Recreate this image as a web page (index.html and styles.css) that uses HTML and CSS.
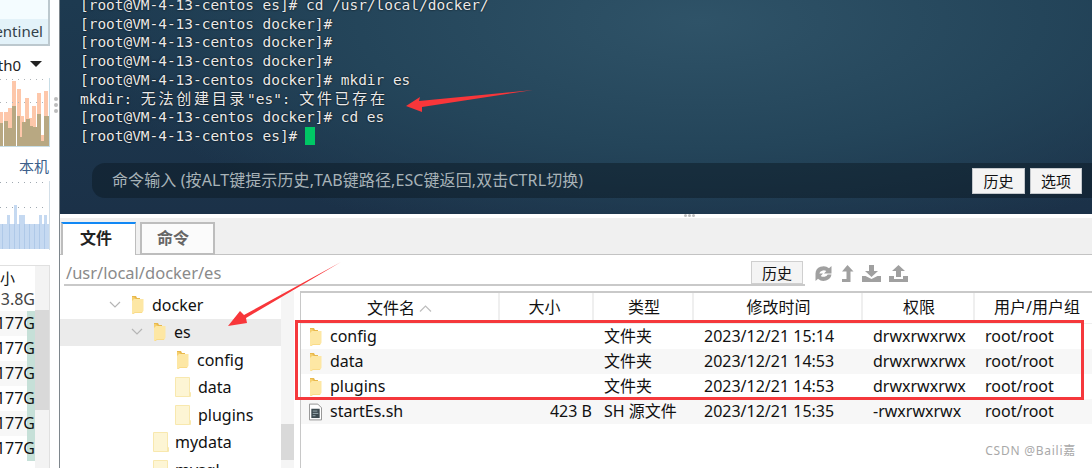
FILE: index.html
```html
<!DOCTYPE html>
<html lang="zh">
<head>
<meta charset="utf-8">
<title>FinalShell</title>
<link rel="stylesheet" href="styles.css">
</head>
<body>
<svg class="defs" width="0" height="0" aria-hidden="true">
  <symbol id="folder" viewBox="0 0 13 18">
    <path d="M1 0h4l1 2h3v14H1z" fill="#e8b84c"/>
    <path d="M0 1h1v17h1l2-1h7l1-14H5L3 1z" fill="#f6cf6d"/>
    <path d="M3 3h9.500v11.500l-1 2H3.500L1.500 18H1V5z" fill="#fde7a4"/>
  </symbol>
  <symbol id="pale" viewBox="0 0 16 20">
    <path d="M.5.500h14v15h1v4H.5z" fill="#fdf5d4" stroke="#f8e8ae"/>
    <path d="M14.500 14v5" stroke="#f8e8ae" fill="none"/>
  </symbol>
  <symbol id="chev" viewBox="0 0 12 8">
    <path d="M1 1l5 5 5-5" fill="none" stroke="#b5b5b5" stroke-width="1.200"/>
  </symbol>
</svg>
<div class="app">
  <aside class="side">
    <div class="tabhead"><span class="tabname">Sentinel</span></div>
    <div class="netsel"><span class="netname">eth0</span><span class="tri"></span></div>
    <svg class="chart" width="50" height="69" viewBox="0 78 50 69">
      <g class="orange">
        <rect x="0" y="112" width="3" height="34"/><rect x="4" y="112" width="4" height="34"/><rect x="8" y="108" width="4" height="38"/><rect x="12" y="81" width="4" height="65"/><rect x="17" y="89" width="4" height="57"/><rect x="21" y="116" width="3" height="30"/><rect x="25" y="98" width="4" height="48"/><rect x="29" y="118" width="3" height="28"/><rect x="32" y="106" width="4" height="40"/><rect x="37" y="93" width="4" height="53"/><rect x="41" y="135" width="3" height="11"/><rect x="44" y="91" width="4" height="55"/>
      </g>
      <g class="tan">
        <rect x="0" y="123" width="3" height="23"/><rect x="4" y="121" width="4" height="25"/><rect x="8" y="128" width="4" height="18"/><rect x="12" y="106" width="4" height="40"/><rect x="17" y="116" width="3" height="30"/><rect x="19" y="137" width="3" height="9"/><rect x="22" y="122" width="4" height="24"/><rect x="26" y="119" width="4" height="27"/><rect x="29" y="126" width="4" height="20"/><rect x="33" y="127" width="4" height="19"/><rect x="37" y="114" width="4" height="32"/><rect x="41" y="141" width="3" height="5"/><rect x="44" y="116" width="5" height="30"/>
      </g>
      <path class="dots" d="M0 79.500h48M0 102.500h48"/>
      <path class="baseline" d="M0 146.500h49M49.500 78v69"/>
    </svg>
    <div class="hostlabel">本机</div>
    <svg class="chart chart-blue" width="50" height="69" viewBox="0 180 50 69">
      <g class="blue">
        <rect x="0" y="223" width="49" height="25"/><rect x="7" y="214" width="3" height="9"/><rect x="14" y="204" width="3" height="19"/><rect x="19" y="214" width="6" height="9"/><rect x="39" y="214" width="3" height="9"/><rect x="44" y="214" width="3" height="9"/>
      </g>
      <path class="stripes" d="M2.500 223v25M9.500 223v25M14.500 223v25M19.500 223v25M24.500 223v25M29.500 223v25M34.500 223v25M39.500 223v25M44.500 223v25"/>
      <path class="dots dots-blue" d="M0 181.500h48M0 206.500h48"/>
      <path class="baseline-blue" d="M49.500 180v69"/>
    </svg>
    <div class="disks">
      <div class="disklist">
        <div class="diskhead">小</div>
        <div class="disk"><span class="disksize">3.8G</span></div>
        <div class="disk alt"><span class="disksize used">177G</span></div>
        <div class="disk"><span class="disksize used">177G</span></div>
        <div class="disk alt"><span class="disksize used">177G</span></div>
        <div class="disk"><span class="disksize used">177G</span></div>
        <div class="disk alt"><span class="disksize used">177G</span></div>
        <div class="disk"><span class="disksize used">177G</span></div>
      </div>
      <div class="diskscroll"><div class="diskthumb"></div></div>
    </div>
    <div class="grip grip-side"><i></i><i></i><i></i></div>
  </aside>

  <main class="main">
    <section class="term">
      <div class="log">
        <div>[root@VM-4-13-centos es]# cd /usr/local/docker/</div>
        <div>[root@VM-4-13-centos docker]#</div>
        <div>[root@VM-4-13-centos docker]#</div>
        <div>[root@VM-4-13-centos docker]#</div>
        <div>[root@VM-4-13-centos docker]# mkdir es</div>
        <div>mkdir: <span class="wide">无法创建目录</span>"es": <span class="wide">文件已存在</span></div>
        <div>[root@VM-4-13-centos docker]# cd es</div>
        <div>[root@VM-4-13-centos es]# <span class="cursor"></span></div>
      </div>
      <div class="cmdbar">
        <span class="cmdhint">命令输入 (按ALT键提示历史,TAB键路径,ESC键返回,双击CTRL切换)</span>
        <button class="cmdbtn">历史</button>
        <button class="cmdbtn">选项</button>
      </div>
    </section>

    <section class="lower">
      <div class="grip grip-h"><i></i><i></i><i></i></div>
      <div class="tabs">
        <div class="tab active">文件</div>
        <div class="tab">命令</div>
      </div>
      <div class="pathbar">
        <div class="pathbox">
          <span class="pathtext">/usr/local/docker/es</span>
          <button class="histbtn">历史</button>
        </div>
        <div class="tools">
          <svg width="19" height="17" viewBox="0 0 19 17"><path d="M1.500 8.500a8 7.500 0 0 1 13.500-5.200L17.500 1v7.500H10l2.300-2.400a4.500 4 0 0 0-7 2.400z M17.500 9.500a8 7.500 0 0 1-13.500 4.200L1.500 16V8.500H9l-2.300 2.400a4.500 4 0 0 0 7-1.400z" fill="#a0a0a0"/></svg>
          <svg width="13" height="17" viewBox="0 0 13 17"><path d="M6.500 0L12.500 6.500H9.500V17H1v-3h4.500V6.500H1z" fill="#a0a0a0"/></svg>
          <svg width="19" height="17" viewBox="0 0 19 17"><path d="M7 0h5v6h4l-6.500 6L3 6h4z" fill="#a0a0a0"/><path d="M0 11h3.500l6 3 6-3H19v6H0z" fill="#a0a0a0"/></svg>
          <svg width="19" height="17" viewBox="0 0 19 17"><path d="M9.500 0L16 6h-4v6H7V6H3z" fill="#a0a0a0"/><path d="M0 11h5v3h9v-3h5v6H0z" fill="#a0a0a0"/></svg>
        </div>
      </div>
      <div class="browser">
        <div class="tree">
          <div class="node d1"><svg class="chev"><use href="#chev"/></svg><svg class="fold"><use href="#folder"/></svg><span>docker</span></div>
          <div class="node d2 selected"><svg class="chev"><use href="#chev"/></svg><svg class="fold"><use href="#folder"/></svg><span>es</span></div>
          <div class="node d3"><svg class="fold gap"><use href="#folder"/></svg><span>config</span></div>
          <div class="node d3"><svg class="fold palef"><use href="#pale"/></svg><span>data</span></div>
          <div class="node d3"><svg class="fold palef"><use href="#pale"/></svg><span>plugins</span></div>
          <div class="node d2n"><svg class="fold palef"><use href="#pale"/></svg><span>mydata</span></div>
          <div class="node d2n"><svg class="fold palef"><use href="#pale"/></svg><span>mysql</span></div>
        </div>
        <div class="treescroll"><div class="treethumb"></div></div>
        <div class="grip grip-v"><i></i><i></i><i></i></div>
        <div class="files">
          <div class="row head">
            <div class="c name">文件名<svg class="sort" width="13" height="7" viewBox="0 0 13 7"><path d="M1 6.500l5.500-5.500 5.500 5.500" fill="none" stroke="#bdbdbd" stroke-width="1.200"/></svg></div>
            <div class="c">大小</div><div class="c">类型</div><div class="c">修改时间</div><div class="c">权限</div><div class="c">用户/用户组</div>
          </div>
          <div class="row">
            <div class="c name"><svg class="ficon"><use href="#folder"/></svg>config</div><div class="c size"></div><div class="c">文件夹</div><div class="c">2023/12/21 15:14</div><div class="c">drwxrwxrwx</div><div class="c">root/root</div>
          </div>
          <div class="row alt">
            <div class="c name"><svg class="ficon"><use href="#folder"/></svg>data</div><div class="c size"></div><div class="c">文件夹</div><div class="c">2023/12/21 14:53</div><div class="c">drwxrwxrwx</div><div class="c">root/root</div>
          </div>
          <div class="row">
            <div class="c name"><svg class="ficon"><use href="#folder"/></svg>plugins</div><div class="c size"></div><div class="c">文件夹</div><div class="c">2023/12/21 14:53</div><div class="c">drwxrwxrwx</div><div class="c">root/root</div>
          </div>
          <div class="row alt">
            <div class="c name"><svg class="ficon" viewBox="0 0 14 18"><path d="M.5.500h9l4 4v13H.5z" fill="#fff" stroke="#8c8c8c"/><rect x="2.500" y="5.500" width="9" height="10" fill="#3d4a50"/><path d="M4 8h5M4 10.500h6M4 13h3" stroke="#9fb0b6"/></svg>startEs.sh</div><div class="c size">423 B</div><div class="c">SH 源文件</div><div class="c">2023/12/21 15:35</div><div class="c">-rwxrwxrwx</div><div class="c">root/root</div>
          </div>
        </div>
      </div>
    </section>
  </main>
</div>

<div class="redbox"></div>
<svg class="arrows" width="1092" height="468" viewBox="0 0 1092 468">
  <path d="M406 106L420 97 419 101 533 90 422 107 422 112z" fill="#f8363a"/>
  <path d="M228 326L240 311 244 315 341 262 246 318 247 323z" fill="#f8363a"/>
</svg>
<div class="mark">CSDN @Baili嘉</div>
</body>
</html>
```
FILE: styles.css
```css
* { box-sizing: border-box; }
html, body { margin: 0; height: 468px; overflow: hidden; background: #fff; }
body { font-family: "Noto Sans", "Noto Sans CJK SC", sans-serif; font-size: 16px; color: #111; position: relative; }
.defs { position: absolute; }
.app { display: grid; grid-template-columns: 60px 1fr; height: 468px; }

/* sidebar */
.side { position: relative; height: 468px; overflow: hidden; border-right: 1px solid #7e868c; background: #fff; }
.tabhead { width: 50px; height: 46px; background: linear-gradient(#f4fcff 0, #f4fcff 19px, #e3f2f9 19px); border-right: 2px solid #bcc8ce; border-bottom: 2px solid #bcc8ce; display: flex; justify-content: flex-end; align-items: flex-end; overflow: hidden; padding: 0 5px 2px 0; }
.tabname { font-size: 15px; line-height: 22px; color: #33414a; white-space: nowrap; }
.netsel { width: 50px; height: 32px; display: flex; justify-content: flex-end; align-items: center; overflow: hidden; padding: 6px 8px 0 0; }
.netname { font-size: 15px; white-space: nowrap; margin-right: 9px; color: #222; line-height: 20px; }
.tri { flex: none; width: 0; height: 0; border-left: 6px solid transparent; border-right: 6px solid transparent; border-top: 6px solid #222; margin-top: -3px; }
.chart { display: block; }
.orange rect { fill: #fdc7aa; }
.tan rect { fill: #b8a882; }
.dots { stroke: #aeb4b8; fill: none; stroke-dasharray: 1 5; }
.dots-blue { stroke: #9fa8b0; }
.baseline { stroke: #c7dde6; fill: none; }
.baseline-blue { stroke: #d3dfe8; fill: none; }
.blue rect { fill: #c5d9f1; }
.stripes { stroke: #afc9e8; fill: none; }
.hostlabel { width: 50px; height: 34px; text-align: right; padding-right: 1px; font-size: 15px; line-height: 38px; color: #3d5f8b; }
.disks { width: 50px; margin-top: 15px; height: 220px; display: flex; border: 1px solid #e0e0e0; border-width: 1px 1px 0 0; }
.disklist { flex: none; width: 35px; overflow: hidden; }
.diskhead { height: 22px; line-height: 24px; font-size: 15px; white-space: nowrap; }
.disk { height: 25px; display: flex; justify-content: flex-end; font-size: 16px; line-height: 25px; white-space: nowrap; overflow: hidden; }
.disk:nth-child(2) { height: 23px; line-height: 22px; color: #444; }
.disk.alt { background: #f7f7f7; }
.disksize { flex: none; display: block; }
.used { background: linear-gradient(270deg, #c6e0d8 0, #c6e0d8 8px, transparent 8px); }
.diskscroll { flex: 1; background: #f3f3f3; }
.diskthumb { height: 100px; margin-top: 44px; background: #d9d9d9; }

.grip { position: absolute; display: flex; gap: 3px; }
.grip i { display: block; width: 3px; height: 3px; border-radius: 50%; background: #bcbcbc; }
.grip-side { left: 54px; top: 97px; flex-direction: column; gap: 2px; }
.grip-side i { width: 4px; height: 4px; }
.grip-h { left: 624px; top: 0; gap: 1px; }
.grip-v { left: -4px; top: 114px; flex-direction: column; gap: 2px; }

/* terminal */
.main { display: flex; flex-direction: column; min-width: 0; }
.term { height: 214px; flex: none; position: relative; overflow: hidden; background: radial-gradient(ellipse 620px 230px at 62% 10%, #2f5368 0, #24455a 55%, rgba(31,56,78,0) 100%), linear-gradient(#1d3a50, #1b3148); }
.log { padding-top: 1px; margin: -5px 0 0 20px; font-family: "DejaVu Sans Mono", monospace; font-size: 14.45px; line-height: 18.72px; color: #eaeaea; text-shadow: 0 0 2px #000; }
.log div { white-space: pre; height: 18.72px; }
.wide { font-family: "Noto Sans CJK SC", sans-serif; font-size: 15px; letter-spacing: 2.7px; line-height: 1; }
.cursor { display: inline-block; width: 10px; height: 18px; background: #00c765; vertical-align: -4px; margin-left: -1px; }
.cmdbar { position: absolute; left: 32px; right: 0; top: 163px; height: 35px; border-radius: 13px 0 0 13px; background: rgba(12, 26, 36, .5); display: flex; align-items: center; padding: 0 10px 0 20px; gap: 5px; }
.cmdhint { flex: 1; font-size: 16px; letter-spacing: .1px; color: #a8b3b8; white-space: nowrap; line-height: 37px; }
.cmdbtn { width: 53px; height: 26px; padding: 0; border: 1px solid #c4c8cc; background: #f4f4f4; font: 15px "Noto Sans CJK SC", sans-serif; color: #111; }
.cmdbtn:last-child { width: 52px; }

/* lower */
.lower { flex: 1; position: relative; min-height: 0; padding-top: 4px; display: flex; flex-direction: column; }
.tabs { height: 37px; flex: none; display: flex; gap: 4px; background: #f0f0f0; border-bottom: 1px solid #c3c3c3; padding: 4px 0 0 1px; }
.tab { width: 75px; height: 33px; border: 2px solid #bdbdbd; background: #fbfbfb; color: #666; font-weight: 700; text-align: center; font-size: 16px; line-height: 29px; padding-right: 9px; }
.tab.active { width: 75px; height: 33px; background: #fff; color: #222; border-top-color: #1188f5; border-bottom: 0; position: relative; z-index: 1; border-right-width: 1px; padding-right: 6px; }
.pathbar { height: 36px; flex: none; display: flex; align-items: flex-start; padding-left: 4px; background: #fff; }
.pathbox { width: 741px; height: 31px; border-bottom: 2px solid #c9c9c9; display: flex; align-items: flex-end; justify-content: space-between; padding: 0 2px 0 2px; }
.pathtext { font-size: 16.500px; color: #8a8a8a; line-height: 22px; }
.histbtn { width: 52px; height: 23px; padding: 0; border: 1px solid #cfcfcf; background: #f4f4f4; font: 15px "Noto Sans CJK SC", sans-serif; color: #111; }
.tools { display: flex; gap: 8px; padding: 10px 0 0 9px; }
.tools svg { display: block; flex: none; }
.browser { flex: 1; display: flex; min-height: 0; position: relative; overflow: hidden; }
.tree { width: 221px; flex: none; overflow: hidden; }
.treescroll { width: 13px; flex: none; background: #f5f5f5; padding-top: 133px; }
.treethumb { height: 36px; background: #d9d9d9; }
.node { height: 27.5px; display: flex; align-items: center; font-size: 16px; white-space: nowrap; }
.node.selected { background: #ebebeb; }
.chev { width: 12px; height: 8px; flex: none; margin-right: 10px; }
.fold { width: 13px; height: 18px; flex: none; margin-right: 8px; }
.fold.gap { margin-left: 1px; }
.palef { width: 16px; height: 20px; margin-right: 7px; }
.d1 { padding-left: 49px; }
.d2 { padding-left: 71px; }
.d3 { padding-left: 115px; }
.d2n { padding-left: 93px; }
.d2n .palef { margin-right: 6px; }

/* files */
.files { flex: 1; min-width: 0; margin-left: 6px; border-left: 1px solid #c8c8c8; border-top: 2px solid #c9c9c9; }
.row { display: grid; grid-template-columns: 199px 94px 100px 169px 112px 118px; height: 25px; align-items: center; font-size: 16px; white-space: nowrap; }
.row.alt { background: #f7f7f7; }
.row.head { height: 31px; border-bottom: 1px solid #eee; }
.head .c { height: 30px; line-height: 29px; text-align: center; border-right: 2px solid #efefef; padding: 0 0 0 2px; }
.head .c:nth-child(2) { padding: 0 3px 0 0; }
.head .c:last-child { border-right: 0; padding: 0 0 0 6px; }
.sort { margin-left: 4px; vertical-align: 1px; }
.c { padding-left: 10px; line-height: 25px; }
.c.name { display: flex; align-items: center; padding-left: 8px; }
.ficon { width: 13px; height: 18px; margin-right: 8px; flex: none; }
.head .c.name { justify-content: center; padding: 0; }
.row:not(.head) .c:nth-child(2) { text-align: right; padding: 0 2px 0 0; }

.redbox { position: absolute; left: 295px; top: 320px; width: 789px; height: 80px; border: 3px solid #f5383c; pointer-events: none; }
.arrows { position: absolute; left: 0; top: 0; pointer-events: none; }
.mark { position: absolute; right: 16px; top: 443px; font-size: 12px; letter-spacing: .75px; line-height: 16px; color: #a9a9a9; white-space: nowrap; }
```
